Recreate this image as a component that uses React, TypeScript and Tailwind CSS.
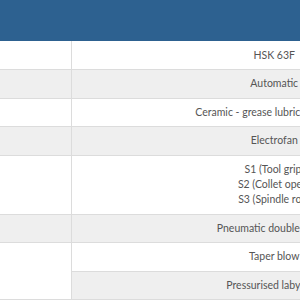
import React from 'react'

const rows: { value: React.ReactNode; gray?: boolean; tall?: boolean }[] = [
  { value: 'HSK 63F' },
  { value: 'Automatic', gray: true },
  { value: 'Ceramic - grease lubricated for life' },
  { value: 'Electrofan', gray: true },
  {
    value: (
      <>
        S1 (Tool grip)
        <br />
        S2 (Collet open)
        <br />
        S3 (Spindle rot.)
      </>
    ),
    tall: true,
  },
  { value: 'Pneumatic double-acting', gray: true },
]

const Cell = ({ children, gray }: { children: React.ReactNode; gray?: boolean }) => (
  <td
    className={`border-b border-[#dcdcdc] px-2 py-0 text-center align-middle leading-[15px] whitespace-nowrap ${
      gray ? 'bg-[#efefef]' : 'bg-white'
    }`}
  >
    {children}
  </td>
)

export default function App() {
  return (
    <div className="h-[300px] w-[300px] overflow-hidden bg-white font-['Lato',sans-serif] text-[10.5px] text-[#555]">
      <table className="w-[477px] border-collapse">
        <thead>
          <tr>
            <th colSpan={2} className="h-[41px] bg-[#2d6190]" />
          </tr>
        </thead>
        <tbody>
          {rows.map((r, i) => (
            <tr key={i} className={r.tall ? 'h-[59px]' : 'h-[28.5px]'}>
              <td
                className={`w-[71px] border-b border-r border-[#dcdcdc] ${
                  r.gray ? 'bg-[#efefef]' : 'bg-white'
                }`}
              />
              <Cell gray={r.gray}>{r.value}</Cell>
            </tr>
          ))}
          <tr className="h-[28.5px]">
            <td rowSpan={2} className="w-[71px] border-b border-r border-[#dcdcdc] bg-white" />
            <Cell>Taper blow</Cell>
          </tr>
          <tr className="h-[28.5px]">
            <Cell gray>Pressurised labyrinth</Cell>
          </tr>
        </tbody>
      </table>
    </div>
  )
}
